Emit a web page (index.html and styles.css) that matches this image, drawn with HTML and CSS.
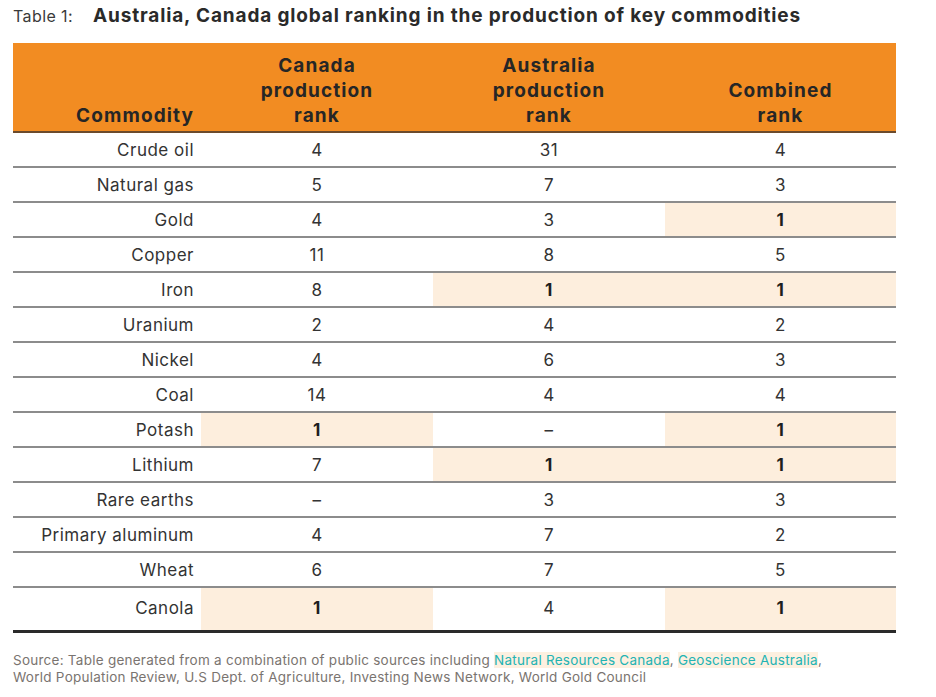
FILE: index.html
```html
<!DOCTYPE html>
<html>
<head>
<meta charset="utf-8">
<link rel="stylesheet" href="styles.css">
</head>
<body>
<div class="page">
  <h1 class="title"><span class="label">Table 1:</span><span class="main">Australia, Canada global ranking in the production of key commodities</span></h1>
  <table class="rank">
    <colgroup>
      <col class="c1"><col class="c2"><col class="c3"><col class="c4">
    </colgroup>
    <thead>
      <tr>
        <th class="name">Commodity</th>
        <th>Canada<br>production<br>rank</th>
        <th>Australia<br>production<br>rank</th>
        <th>Combined<br>rank</th>
      </tr>
    </thead>
    <tbody>
      <tr><td class="name">Crude oil</td><td>4</td><td>31</td><td>4</td></tr>
      <tr><td class="name">Natural gas</td><td>5</td><td>7</td><td>3</td></tr>
      <tr><td class="name">Gold</td><td>4</td><td>3</td><td class="hl">1</td></tr>
      <tr><td class="name">Copper</td><td>11</td><td>8</td><td>5</td></tr>
      <tr><td class="name">Iron</td><td>8</td><td class="hl">1</td><td class="hl">1</td></tr>
      <tr><td class="name">Uranium</td><td>2</td><td>4</td><td>2</td></tr>
      <tr><td class="name">Nickel</td><td>4</td><td>6</td><td>3</td></tr>
      <tr><td class="name">Coal</td><td>14</td><td>4</td><td>4</td></tr>
      <tr><td class="name">Potash</td><td class="hl">1</td><td>–</td><td class="hl">1</td></tr>
      <tr><td class="name">Lithium</td><td>7</td><td class="hl">1</td><td class="hl">1</td></tr>
      <tr><td class="name">Rare earths</td><td>–</td><td>3</td><td>3</td></tr>
      <tr><td class="name">Primary aluminum</td><td>4</td><td>7</td><td>2</td></tr>
      <tr><td class="name">Wheat</td><td>6</td><td>7</td><td>5</td></tr>
      <tr class="last"><td class="name">Canola</td><td class="hl">1</td><td>4</td><td class="hl">1</td></tr>
    </tbody>
  </table>
  <p class="source">Source: Table generated from a combination of public sources including <span class="link">Natural Resources Canada</span>, <span class="link">Geoscience Australia</span>,<br>World Population Review, U.S Dept. of Agriculture, Investing News Network, World Gold Council</p>
</div>
</body>
</html>
```
FILE: styles.css
```css
html, body {
  margin: 0;
  padding: 0;
  background: #ffffff;
}
body {
  font-family: "Inter", "Open Sans", sans-serif;
  color: #2b2b2b;
}
.page {
  padding: 4px 0 0 13px;
  width: 883px;
}
.title {
  margin: 0;
  height: 39px;
  display: flex;
  align-items: flex-start;
  font-weight: normal;
  line-height: 24px;
}
.title .label {
  font-size: 16px;
  color: #3a3a3a;
  width: 80px;
  letter-spacing: 0.4px;
}
.title .main {
  font-size: 19px;
  font-weight: 700;
  color: #2a2a2a;
  letter-spacing: 0.85px;
}
.rank {
  border-collapse: collapse;
  width: 883px;
  table-layout: fixed;
}
.c1 { width: 188px; }
.c2 { width: 232px; }
.c3 { width: 232px; }
.c4 { width: 231px; }
.rank th {
  background: #f28c22;
  font-size: 19px;
  font-weight: 700;
  color: #262626;
  line-height: 25px;
  letter-spacing: 1.1px;
  vertical-align: bottom;
  text-align: center;
  padding: 10px 0 3px 0;
  border-bottom: 2px solid #6b4a2c;
}
.rank th.name {
  text-align: right;
  padding-right: 7px;
}
.rank td {
  height: 33px;
  padding: 0;
  font-size: 17px;
  letter-spacing: 0.5px;
  color: #333333;
  text-align: center;
  border-bottom: 2px solid #8c8c8c;
}
.rank td.name {
  text-align: right;
  padding-right: 7px;
}
.rank td.hl {
  background: #fdeedd;
  font-weight: 700;
  color: #1e1e1e;
}
.rank tr.last td {
  height: 39px;
  padding-bottom: 3px;
  border-bottom: 3px solid #2a2a2a;
}
.source {
  margin: 19px 0 0 0;
  font-size: 13.5px;
  line-height: 17px;
  letter-spacing: 0.25px;
  color: #7a7470;
}
.source .link {
  color: #23b3b3;
  background: #fdf0e0;
}
```
